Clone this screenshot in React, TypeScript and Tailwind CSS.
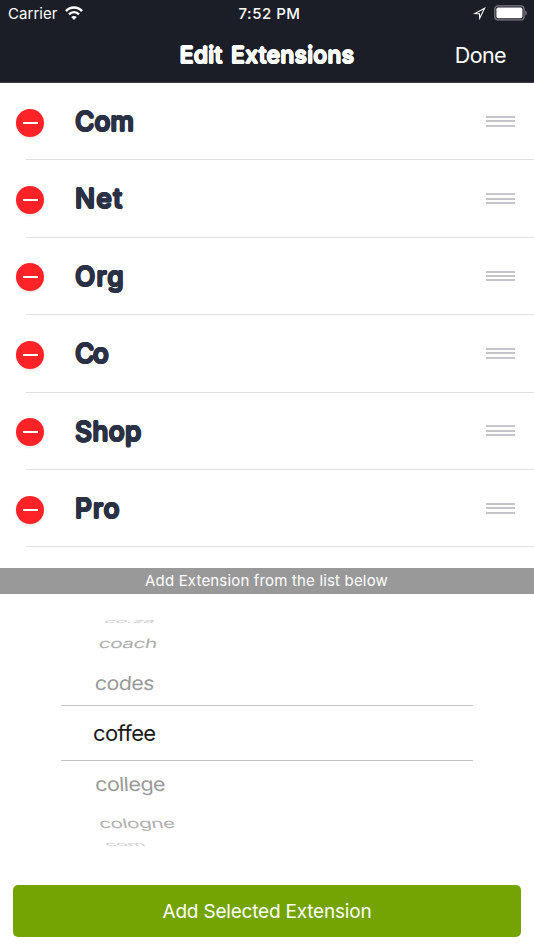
import React from "react";
import clsx from "clsx";

type Extension = {
  name: string;
  className: string;
};

type WheelItem = {
  label: string;
  row: string;
  text: string;
};

const extensions: Extension[] = [
  { name: "Com", className: "tracking-[0px]" },
  { name: "Net", className: "tracking-[1.3px]" },
  { name: "Org", className: "tracking-[1.1px]" },
  { name: "Co", className: "tracking-[-1.6px]" },
  { name: "Shop", className: "tracking-[0.3px]" },
  { name: "Pro", className: "tracking-[0.9px]" },
];

const wheel: WheelItem[] = [
  {
    label: "co.za",
    row: "h-[10px] pl-[105px] overflow-hidden text-[#cdcdcd]",
    text: "[transform:scale(0.93,0.24)_skewX(-16deg)]",
  },
  {
    label: "coach",
    row: "h-[34px] pl-[99px] text-[#adadad]",
    text: "[transform:scale(0.95,0.6)_skewX(-7deg)]",
  },
  {
    label: "codes",
    row: "h-[45px] pl-[95px] text-[#999999]",
    text: "[transform:scale(0.97,0.88)_skewX(-3deg)]",
  },
  {
    label: "coffee",
    row: "h-[56px] ml-[61px] mr-[61px] pl-[32px] border-y border-[#c4c4c4] text-[#1a1a1a]",
    text: "",
  },
  {
    label: "college",
    row: "h-[46px] pl-[95px] text-[#999999]",
    text: "[transform:scale(0.98,0.88)_skewX(3deg)]",
  },
  {
    label: "cologne",
    row: "h-[32px] pl-[99px] text-[#b0b0b0]",
    text: "[transform:scale(0.95,0.6)_skewX(7deg)]",
  },
  {
    label: "com",
    row: "h-[10px] pl-[105px] overflow-hidden text-[#cdcdcd]",
    text: "[transform:scale(0.9,0.24)_skewX(16deg)]",
  },
];

const StatusBar = () => (
  <div className="flex h-[28px] items-center justify-between pl-2 pr-[6px]">
    <div className="flex w-[160px] items-center gap-[7px]">
      <span className="text-[15px] tracking-[0.05px]">Carrier</span>
      <svg width="18" height="14" viewBox="0 0 18 14" fill="none" stroke="white" className="-mt-[2px]">
        <path d="M1 5.2C5.4.4 12.6.4 17 5.2" strokeWidth="2.5" />
        <path d="M4 8.4c2.8-3 7.2-3 10 0" strokeWidth="2.3" />
        <path d="M9 14 6.2 11c1.6-1.5 4-1.5 5.6 0Z" fill="white" stroke="none" />
      </svg>
    </div>
    <span className="pl-[3px] text-[15px] font-medium tracking-[0.5px]">7:52 PM</span>
    <div className="flex w-[160px] items-center justify-end gap-2">
      <svg width="13" height="13" viewBox="0 0 13 13" fill="none" stroke="white" strokeWidth="1.1" className="-mt-[2px]">
        <path d="M11.6 1.2 1.8 6.6l4.6.2.3 4.4 4.9-10Z" strokeLinejoin="miter" />
      </svg>
      <svg width="34" height="16" viewBox="0 0 34 16" className="-mt-[2px]">
        <rect x="0.8" y="0.9" width="29.2" height="14" rx="3.2" fill="none" stroke="#7c7d84" strokeWidth="1.3" />
        <rect x="2.4" y="2.6" width="26" height="10.6" rx="1.6" fill="white" />
        <path d="M31.3 5.4c2 .7 2 4.3 0 5Z" fill="#7c7d84" />
      </svg>
    </div>
  </div>
);

const DeleteIcon = () => (
  <span className="flex size-[28px] items-center justify-center rounded-full bg-[#ff2226] shadow-[0_2px_2px_rgba(0,0,0,0.08)]">
    <span className="h-[2px] w-[15px] bg-white" />
  </span>
);

const DragHandle = () => (
  <span className="flex w-[29px] flex-col gap-[2.4px]">
    <span className="h-[2px] bg-[#c4c4ca]" />
    <span className="h-[2px] bg-[#c4c4ca]" />
    <span className="h-[2px] bg-[#c4c4ca]" />
  </span>
);

// The shadows thicken the letters evenly on all sides, which rounds their corners
const App = () => {
  return (
    <div className="flex h-[950px] w-[534px] flex-col overflow-hidden bg-white font-['Inter',sans-serif]">
      {/* Header */}
      <header className="h-[83px] shrink-0 border-b border-[#393b43] bg-[#1c1e27] text-white">
        <StatusBar />
        <div className="grid h-[54px] grid-cols-[1fr_auto_1fr] items-center">
          <span />
          <h1 className="whitespace-nowrap text-[23px] font-medium tracking-[0.3px] [word-spacing:2px] [text-shadow:0.8px_0_currentColor,-0.8px_0_currentColor,0_0.8px_currentColor,0_-0.8px_currentColor,0.5px_0.5px_currentColor,-0.5px_0.5px_currentColor,0.5px_-0.5px_currentColor,-0.5px_-0.5px_currentColor]">
            Edit Extensions
          </h1>
          <button className="pr-[28px] text-right text-[21.5px] tracking-[-0.6px]">Done</button>
        </div>
      </header>

      {/* Saved extensions */}
      <ul className="h-[485px] shrink-0 overflow-hidden">
        {extensions.map((ext) => (
          <li key={ext.name} className="flex h-[77.4px] pl-[16px]">
            <div className="flex w-[10px] shrink-0 items-center pt-[2px]">
              <button className="shrink-0">
                <DeleteIcon />
              </button>
            </div>
            <div className="flex flex-1 items-center justify-between border-b border-[#dfdfe1] pl-[49px] pr-[19px]">
              <span
                className={clsx(
                  "text-[26.5px] font-medium leading-none text-[#2b3145] [text-shadow:1px_0_currentColor,-1px_0_currentColor,0_1px_currentColor,0_-1px_currentColor,0.6px_0.6px_currentColor,-0.6px_0.6px_currentColor,0.6px_-0.6px_currentColor,-0.6px_-0.6px_currentColor]",
                  ext.className
                )}
              >
                {ext.name}
              </span>
              <DragHandle />
            </div>
          </li>
        ))}
      </ul>

      <div className="flex h-[26px] shrink-0 items-center justify-center bg-[#999999] pr-[1px] text-[15px] tracking-[0.17px] text-white">
        Add Extension from the list below
      </div>

      {/* Picker wheel */}
      <div className="flex h-[291px] shrink-0 flex-col pt-[22px] text-[22px] tracking-[-0.6px]">
        {wheel.map((item) => (
          <div key={item.label} className={clsx("flex shrink-0 items-center", item.row)}>
            <span className={clsx("origin-left leading-none", item.text)}>{item.label}</span>
          </div>
        ))}
      </div>

      <div className="px-[13px]">
        <button className="h-[52px] w-full rounded-[5px] bg-[#74a304] pt-[2px] text-[19px] tracking-[-0.2px] text-white">
          Add Selected Extension
        </button>
      </div>
    </div>
  );
};

export default App;
